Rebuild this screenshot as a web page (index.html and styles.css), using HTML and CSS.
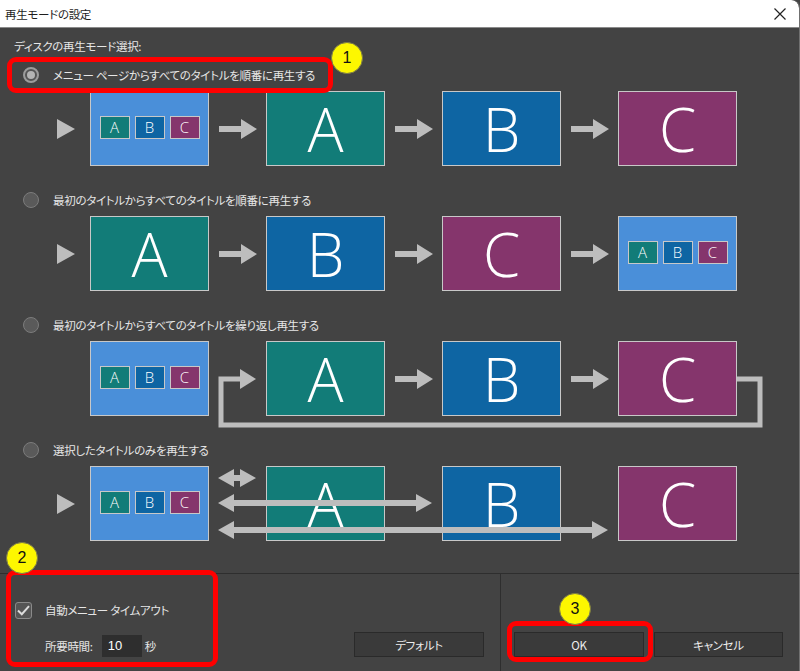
FILE: index.html
```html
<!DOCTYPE html>
<html lang="ja">
<head>
<meta charset="utf-8">
<title>再生モードの設定</title>
<link rel="stylesheet" href="styles.css">
</head>
<body>
<div class="window">
  <div class="titlebar">
    <span class="title">再生モードの設定</span>
    <svg class="close" width="12" height="12" viewBox="0 0 12 12"><path d="M0.5 0.5L11.5 11.5M11.5 0.5L0.5 11.5" stroke="#222" stroke-width="1.2" fill="none"/></svg>
  </div>

  <div class="content">
    <div class="heading">ディスクの再生モード選択:</div>

    <div class="option">
      <div class="radio-row"><span class="radio on"></span><span>メニュー ページからすべてのタイトルを順番に再生する</span></div>
      <div class="diagram">
        <span class="play-cell"><svg width="18" height="20" viewBox="0 0 18 20"><polygon points="0,0 18,10 0,20" class="fill"/></svg></span>
        <div class="box menu"><span class="mini teal">A</span><span class="mini blue">B</span><span class="mini purple">C</span></div>
        <span class="arrow-cell"><svg width="38" height="20" viewBox="0 0 38 20"><path d="M0 7H23V13H0Z M22 0L38 10L22 20Z" class="fill"/></svg></span>
        <div class="box teal">A</div>
        <span class="arrow-cell"><svg width="38" height="20" viewBox="0 0 38 20"><path d="M0 7H23V13H0Z M22 0L38 10L22 20Z" class="fill"/></svg></span>
        <div class="box blue">B</div>
        <span class="arrow-cell"><svg width="38" height="20" viewBox="0 0 38 20"><path d="M0 7H23V13H0Z M22 0L38 10L22 20Z" class="fill"/></svg></span>
        <div class="box purple">C</div>
      </div>
    </div>

    <div class="option">
      <div class="radio-row"><span class="radio"></span><span>最初のタイトルからすべてのタイトルを順番に再生する</span></div>
      <div class="diagram">
        <span class="play-cell"><svg width="18" height="20" viewBox="0 0 18 20"><polygon points="0,0 18,10 0,20" class="fill"/></svg></span>
        <div class="box teal">A</div>
        <span class="arrow-cell"><svg width="38" height="20" viewBox="0 0 38 20"><path d="M0 7H23V13H0Z M22 0L38 10L22 20Z" class="fill"/></svg></span>
        <div class="box blue">B</div>
        <span class="arrow-cell"><svg width="38" height="20" viewBox="0 0 38 20"><path d="M0 7H23V13H0Z M22 0L38 10L22 20Z" class="fill"/></svg></span>
        <div class="box purple">C</div>
        <span class="arrow-cell"><svg width="38" height="20" viewBox="0 0 38 20"><path d="M0 7H23V13H0Z M22 0L38 10L22 20Z" class="fill"/></svg></span>
        <div class="box menu"><span class="mini teal">A</span><span class="mini blue">B</span><span class="mini purple">C</span></div>
      </div>
    </div>

    <div class="option">
      <div class="radio-row"><span class="radio"></span><span>最初のタイトルからすべてのタイトルを繰り返し再生する</span></div>
      <div class="diagram">
        <span class="play-cell"></span>
        <div class="box menu"><span class="mini teal">A</span><span class="mini blue">B</span><span class="mini purple">C</span></div>
        <span class="arrow-cell"></span>
        <div class="box teal">A</div>
        <span class="arrow-cell"><svg width="38" height="20" viewBox="0 0 38 20"><path d="M0 7H23V13H0Z M22 0L38 10L22 20Z" class="fill"/></svg></span>
        <div class="box blue">B</div>
        <span class="arrow-cell"><svg width="38" height="20" viewBox="0 0 38 20"><path d="M0 7H23V13H0Z M22 0L38 10L22 20Z" class="fill"/></svg></span>
        <div class="box purple">C</div>
        <svg class="overlay" width="760" height="95" viewBox="0 0 760 95">
          <polyline points="723,38 746,38 746,84 207,84 207,38 229,38" fill="none" stroke="#bdbdbd" stroke-width="5"/>
          <polygon points="226,28 242,38 226,48" class="fill"/>
        </svg>
      </div>
    </div>

    <div class="option">
      <div class="radio-row"><span class="radio"></span><span>選択したタイトルのみを再生する</span></div>
      <div class="diagram">
        <span class="play-cell"><svg width="18" height="20" viewBox="0 0 18 20"><polygon points="0,0 18,10 0,20" class="fill"/></svg></span>
        <div class="box menu"><span class="mini teal">A</span><span class="mini blue">B</span><span class="mini purple">C</span></div>
        <span class="arrow-cell"></span>
        <div class="box teal">A</div>
        <span class="arrow-cell"></span>
        <div class="box blue">B</div>
        <span class="arrow-cell"></span>
        <div class="box purple">C</div>
        <svg class="overlay" width="760" height="95" viewBox="0 0 760 95">
          <path class="fill" d="M204 12L220 3V9H226V3L242 12L226 21V15H220V21Z"/>
          <path class="fill" d="M204 37L220 28V34H402V28L418 37L402 46V40H220V46Z"/>
          <path class="fill" d="M204 64L220 55V61H578V55L594 64L578 73V67H220V73Z"/>
        </svg>
      </div>
    </div>
  </div>

  <div class="footer">
    <div class="footer-left">
      <div class="settings">
        <div class="check-row">
          <span class="checkbox"><svg width="13" height="11" viewBox="0 0 13 11"><path d="M1 5.5L4.8 9.2L12 1.2" fill="none" stroke="#dcdcdc" stroke-width="2"/></svg></span>
          <span>自動メニュー タイムアウト</span>
        </div>
        <div class="time-row">
          <span>所要時間:</span>
          <span class="num-input">10</span>
          <span>秒</span>
        </div>
      </div>
      <button class="btn default-btn">デフォルト</button>
    </div>
    <div class="footer-right">
      <button class="btn">OK</button>
      <button class="btn cancel-btn">キャンセル</button>
    </div>
  </div>

  <div class="mark mark-1"></div>
  <div class="mark mark-2"></div>
  <div class="mark mark-3"></div>
  <div class="badge badge-1">1</div>
  <div class="badge badge-2">2</div>
  <div class="badge badge-3">3</div>
</div>
</body>
</html>
```

FILE: styles.css
```css
* { box-sizing: border-box; }

html, body {
  margin: 0;
  padding: 0;
  background: #434343;
}

body {
  font-family: "Noto Sans CJK JP", sans-serif;
  font-feature-settings: "palt";
  font-size: 11.5px;
  letter-spacing: -0.3px;
  color: #e6e6e6;
}

.window {
  position: relative;
  width: 800px;
  height: 671px;
  background: #434343;
  border-right: 1px solid #707070;
  border-top-right-radius: 8px;
  overflow: hidden;
}

.titlebar {
  height: 28px;
  background: #ffffff;
  border-bottom: 1px solid #8a8a8a;
  border-top-right-radius: 8px;
  display: flex;
  align-items: center;
  justify-content: space-between;
  padding: 0 13px 0 5px;
  color: #1e1e1e;
}

.close { display: block; }

.content {
  height: 545px;
  padding: 8px 14px 0;
}

.heading {
  height: 20px;
  line-height: 20px;
  margin-bottom: 9px;
}

.option { margin-bottom: 24px; }

.radio-row {
  display: flex;
  align-items: center;
  gap: 14px;
  height: 20px;
  padding-left: 9px;
}

.radio {
  width: 16px;
  height: 16px;
  border-radius: 50%;
  background: #5a5a5a;
  border: 1px solid #7c7c7c;
  flex: none;
  display: flex;
  align-items: center;
  justify-content: center;
}

.radio.on {
  background: #555;
  border: 2px solid #9c9c9c;
}

.radio.on::after {
  content: "";
  width: 8px;
  height: 8px;
  border-radius: 50%;
  background: #b4b4b4;
}

.diagram {
  position: relative;
  display: flex;
  align-items: center;
  height: 75px;
  margin-top: 6px;
  padding-left: 43px;
}

.fill { fill: #bdbdbd; }

.play-cell {
  width: 33px;
  height: 20px;
  display: flex;
  align-items: center;
  flex: none;
}

.play-cell svg, .arrow-cell svg { display: block; }

.arrow-cell {
  width: 57px;
  display: flex;
  justify-content: center;
  align-items: center;
  flex: none;
}

.box {
  width: 119px;
  height: 75px;
  flex: none;
  border: 1px solid #c8c8c8;
  display: flex;
  align-items: center;
  justify-content: center;
  font-family: "Open Sans", "Lato", sans-serif;
  font-weight: 300;
  font-size: 60px;
  letter-spacing: 0;
  line-height: 1;
  color: #ffffff;
}

.box.menu {
  gap: 5px;
  padding-bottom: 2px;
}

.menu { background: #4a8fd9; }
.teal { background: #127c78; }
.blue { background: #0e65a3; }
.purple { background: #85356c; }

.mini {
  width: 30px;
  height: 23px;
  border: 1px solid #c8c8c8;
  display: flex;
  align-items: center;
  justify-content: center;
  font-size: 15px;
  font-weight: 300;
  color: #ffffff;
}

.overlay {
  position: absolute;
  left: 0;
  top: 0;
  overflow: visible;
}

.footer {
  height: 98px;
  display: flex;
  border-top: 1px solid #2e2e2e;
}

.footer-left {
  width: 501px;
  border-right: 1px solid #2e2e2e;
  display: flex;
  padding-bottom: 14px;
}

.settings {
  padding-top: 27px;
  padding-left: 15px;
}

.check-row {
  display: flex;
  align-items: center;
  gap: 13px;
  height: 18px;
}

.checkbox {
  width: 17px;
  height: 17px;
  border: 1px solid #8a8a8a;
  border-radius: 3px;
  background: #555;
  display: flex;
  align-items: center;
  justify-content: center;
}

.time-row {
  display: flex;
  align-items: center;
  margin-top: 16px;
  padding-left: 30px;
  height: 22px;
}

.num-input {
  width: 40px;
  height: 22px;
  margin-left: 9px;
  margin-right: 3px;
  background: #2e2e2e;
  color: #ffffff;
  font-family: "Liberation Sans", sans-serif;
  font-size: 13px;
  letter-spacing: 0;
  line-height: 22px;
  padding-left: 6px;
}

.btn {
  height: 25px;
  width: 130px;
  background: #3a3a3a;
  border: 1px solid #2a2a2a;
  color: #ececec;
  font-family: "Noto Sans CJK JP", sans-serif;
  font-feature-settings: "palt";
  font-size: 11.5px;
  letter-spacing: -0.3px;
  padding: 0;
}

.default-btn {
  align-self: flex-end;
  margin-left: auto;
  margin-right: 16px;
}

.footer-right {
  flex: 1;
  display: flex;
  align-items: flex-end;
  gap: 10px;
  padding: 0 15px 14px 13px;
}

.cancel-btn { width: 129px; }

.mark {
  position: absolute;
  border: 5px solid #ff0000;
  border-radius: 9px;
}

.mark-1 { left: 7px; top: 57px; width: 326px; height: 36px; }
.mark-2 { left: 6px; top: 570px; width: 212px; height: 97px; }
.mark-3 { left: 507px; top: 621px; width: 146px; height: 41px; }

.badge {
  position: absolute;
  width: 32px;
  height: 32px;
  border-radius: 50%;
  background: #fdf700;
  border: 1px solid #7a7a4a;
  color: #111;
  font-family: "Liberation Sans", sans-serif;
  font-size: 16px;
  letter-spacing: 0;
  display: flex;
  align-items: center;
  justify-content: center;
}

.badge-1 { left: 331px; top: 42px; }
.badge-2 { left: 6px; top: 542px; }
.badge-3 { left: 559px; top: 593px; }
```
